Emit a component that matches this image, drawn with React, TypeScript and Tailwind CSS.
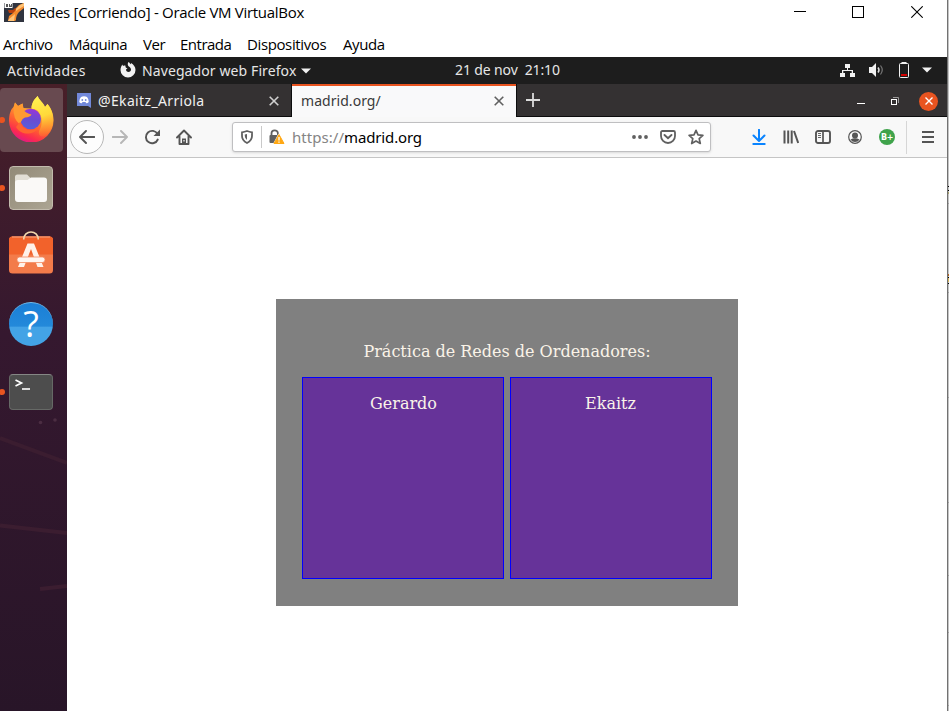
import React from 'react';

type Box = { w: number; h: number; className?: string; children: React.ReactNode };

function Icon({ w, h, className = '', children }: Box) {
  return (
    <svg width={w} height={h} viewBox={`0 0 ${w} ${h}`} fill="none" className={`block shrink-0 ${className}`}>
      {children}
    </svg>
  );
}

function TitleBar() {
  return (
    <div className="flex h-[30px] items-start bg-white text-black">
      <Icon w={20} h={20} className="ml-1 mt-[2px]">
        <rect y="1" width="20" height="19" fill="#30343f" />
        <path d="M4 9q3 2 6-1l5-5 5-2v5l-5 4q-3 3-3 8l-1 1H4l1-5 4-3z" fill="#f58a2c" />
        <path d="M16 3l4-2v3l-5 3-3 2-1-1zM5 17l5-4 1-1-1 7H4z" fill="#ffc477" />
        <path d="M4 8h5l2-2 1 2-3 3H5z" fill="#b8400f" />
        <rect x="0.500" y="0.500" width="8" height="5.500" fill="#fff" />
        <path d="M2 2h2v3H2zM5 2h1v1.500h1V2h1v3H5z" fill="#555" />
      </Icon>
      <span className="ml-[5px] mt-px w-[276px] whitespace-nowrap text-[15px] leading-[22px] tracking-[-0.3px]">
        Redes [Corriendo] - Oracle VM VirtualBox
      </span>
      <Icon w={12} h={12} className="ml-[489px] mt-[6px]">
        <path d="M0 5.500h12" stroke="#000" />
      </Icon>
      <Icon w={12} h={12} className="ml-[46px] mt-[6px]">
        <rect x="0.500" y="0.500" width="11" height="11" stroke="#000" />
      </Icon>
      <Icon w={12} h={12} className="ml-[47px] mt-[6px]">
        <path d="M0.300 0.300l11.400 11.400M11.700 0.300L0.300 11.700" stroke="#000" strokeWidth="1.100" />
      </Icon>
    </div>
  );
}

function MenuBar() {
  return (
    <div className="flex h-[27px] whitespace-nowrap bg-white pl-[3px] pt-[3px] text-[15px] leading-[22px] tracking-[-0.38px] text-black">
      <span className="w-[66px]">Archivo</span>
      <span className="w-[74px] tracking-[-0.5px]">Máquina</span>
      <span className="w-[37px]">Ver</span>
      <span className="w-[67px] tracking-[-0.5px]">Entrada</span>
      <span className="w-[96px]">Dispositivos</span>
      <span>Ayuda</span>
    </div>
  );
}

function GnomeBar() {
  return (
    <div className="flex h-[27px] items-center whitespace-nowrap bg-[#1d1d1d] font-['Noto_Sans',sans-serif] text-[14px] text-[#e6e6e6]">
      <span className="-mt-px ml-[7px] w-[112px] tracking-[0.36px]">Actividades</span>
      <Icon w={16} h={16} className="-mt-px ml-[1px]">
        <path
          d="M8.500 0c1 .500 1.600 1.500 1.800 2.300C10.800 2 11 1.600 11 1c2.600 1.500 4.500 4 4.500 7A7.500 7.500 0 0 1 .500 8C.500 5.500 1.500 3.500 2.500 2.500c0 .700.300 1.200.700 1.500.800-.500 1.500-.500 2.300-.300C5.200 5 6 6 7.500 6.200L6 7.500C6 9 7 10 8.500 10S11 9 11 7.500 9.500 5 8.500 4.300C7.500 3 7.500 1.500 8.500 0z"
          fill="#f2f2f2"
        />
      </Icon>
      <span className="ml-[6px] w-[155px] tracking-[0.1px]">Navegador web Firefox</span>
      <Icon w={10} h={6} className="ml-[4px]">
        <path d="M0 0.500h10L5 5.500z" fill="#f2f2f2" />
      </Icon>
      <span className="-mt-[2px] ml-[144px] w-[106px] whitespace-pre tracking-[-0.12px]">21 de nov  21:10</span>
      <Icon w={15} h={14} className="-mt-[2px] ml-[279px]">
        <path d="M5 1h5v4H8v2h5v3h2v4h-5v-4h1.700V8H3.300v2H5v4H0v-4h2V7h5V5H5z" fill="#f2f2f2" />
      </Icon>
      <Icon w={15} h={14} className="-mt-px ml-[14px]">
        <path d="M0 4h3l4-4v14l-4-4H0z" fill="#f2f2f2" />
        <path d="M9 4.500q2 2.500 0 5" stroke="#ddd" strokeWidth="1.500" />
        <path d="M11.500 2.500q3.500 4.500 0 9" stroke="#777" strokeWidth="1.200" />
      </Icon>
      <Icon w={10} h={16} className="-mt-[2px] ml-[15px]">
        <path d="M2.500 0h5v2h-5z" fill="#f2f2f2" />
        <rect x="0.500" y="1.500" width="9" height="14" rx="1" stroke="#f2f2f2" />
        <path d="M2 12h6v2H2z" fill="#d40000" />
      </Icon>
      <Icon w={10} h={6} className="-mt-px ml-[13px]">
        <path d="M0 0.500h10L5 5.500z" fill="#f2f2f2" />
      </Icon>
    </div>
  );
}

function Running() {
  return (
    <div className="w-[9px] shrink-0">
      <div className="-ml-[1px] h-[6px] w-[6px] rounded-full bg-[#e95420]" />
    </div>
  );
}

function FirefoxLogo() {
  return (
    <Icon w={45} h={46} className="-mt-[2px]">
      <defs>
        <linearGradient id="fox" x1="0.750" y1="0.100" x2="0.350" y2="1">
          <stop stopColor="#ffd53a" />
          <stop offset="0.350" stopColor="#ff9a2e" />
          <stop offset="0.650" stopColor="#ff5a32" />
          <stop offset="0.850" stopColor="#fb2a50" />
          <stop offset="1" stopColor="#e01a85" />
        </linearGradient>
        <linearGradient id="globe" x1="0.600" y1="0" x2="0.400" y2="1">
          <stop stopColor="#9a35d8" />
          <stop offset="0.500" stopColor="#6a4bd2" />
          <stop offset="1" stopColor="#5560dd" />
        </linearGradient>
        <linearGradient id="tail" x1="0.400" y1="0" x2="0.600" y2="1">
          <stop stopColor="#fff250" />
          <stop offset="0.500" stopColor="#ffd93a" />
          <stop offset="1" stopColor="#ff8a2d" stopOpacity="0.200" />
        </linearGradient>
      </defs>
      <path
        d="M28.700 0C30 4 34 6 36 11L38.500 8C42 12 44.500 17 44.500 24A22.200 22 0 0 1 0 25C0 18 2 13 4.500 11L6 6.500L9 10L13.500 7.500L14.500 12Q18 12 22.500 12.500C22.500 7 25.500 3 28.700 0z"
        fill="url(#fox)"
      />
      <path
        d="M28.700 0C30 4 34 6 36 11L38.500 8C47 19 46 33 36 40C31 42 28 38 31 33C34 27 33 18 28 14L22.500 12.500C22.500 7 25.500 3 28.700 0z"
        fill="url(#tail)"
      />
      <circle cx="21.700" cy="23" r="10.300" fill="url(#globe)" />
      <path
        d="M4.500 12L6 6.500L9 10L13.500 7.500L14.500 14Q17 17 22.500 18.500Q21.500 21 16 21.500Q13 22.500 12.500 25L10.500 28Q4 23 4.500 12z"
        fill="#ff9a31"
      />
      <path d="M11 26C13 33 20 36 29 32.500C25 39 12 40 7 31z" fill="#ff6430" />
    </Icon>
  );
}

function Dock() {
  return (
    <div className="relative h-full w-[67px] shrink-0 overflow-hidden bg-gradient-to-b from-[#481f28] via-[#35182f] via-40% to-[#281528]">
      <svg width="67" height="627" className="absolute left-0 top-0" fill="none">
        <path d="M0 354L67 379M0 441.500L67 449M40 505L67 502" stroke="#3b1d30" strokeWidth="4" />
        <circle cx="40.500" cy="338.500" r="1.800" fill="#4b2d42" />
        <circle cx="55" cy="336" r="1.800" fill="#4b2d42" />
      </svg>
      <div className="relative flex flex-col pt-1">
        <div className="flex h-16 w-[63px] items-center rounded-[4px] bg-[#684a50]">
          <Running />
          <FirefoxLogo />
        </div>
        <div className="mt-[14px] flex h-[44px] items-center">
          <Running />
          <div className="flex h-[44px] w-11 items-center justify-center rounded-[4px] border border-[#c2bbad] bg-gradient-to-br from-[#928a78] to-[#aca593]">
            <Icon w={32} h={28}>
              <path d="M0 6V3Q0 0.500 2.500 0.500H12L16 4.500H29Q32 4.500 32 7.500V12H0z" fill="#e2ded5" />
              <path d="M0 8.500Q0 6 3 6H12.500L16 3.500H29Q32 3.500 32 6.500V25Q32 28 29 28H3Q0 28 0 25z" fill="#faf9f7" />
            </Icon>
          </div>
        </div>
        <Icon w={44} h={43} className="ml-[9px] mt-[21px]">
          <rect y="5.500" width="44" height="37" rx="3.500" fill="#f37b4a" />
          <path d="M0 23.500V9Q0 5.500 3.500 5.500H40.500Q44 5.500 44 9V23.500z" fill="#f2622b" />
          <path d="M3 6h38" stroke="#f7a482" />
          <path d="M14.700 8.500C14.700-1.500 29.300-1.500 29.300 8.500" stroke="#f4d9ae" strokeWidth="1.600" />
          <path d="M9 36H15L22 18L28.500 36H34.500L25 12.500H18.500z" fill="#fff1e9" />
          <rect x="8" y="26" width="28" height="5.500" rx="2.700" fill="#fff5f0" stroke="#f38c63" strokeWidth="0.800" />
        </Icon>
        <div className="ml-[9px] mt-[28px] h-11 w-11 rounded-full border-t border-[#71bced] bg-gradient-to-b from-[#1b7fd6] via-[#2389da] via-54% to-[#43a3e6] to-56% text-center font-['Open_Sans',sans-serif] text-[36px] leading-[42px] text-white">
          ?
        </div>
        <div className="mt-[28px] flex h-9 items-center">
          <Running />
          <div className="h-9 w-11 rounded-[4px] border border-[#666966] border-t-[#858785] bg-[#4d4d4d]">
            <Icon w={22} h={18} className="ml-[4px] mt-[2px]">
              <path d="M1.500 3L7.500 6L1.500 9" stroke="#fff" strokeWidth="1.700" />
              <path d="M8 12h8" stroke="#fff" strokeWidth="1.600" />
            </Icon>
          </div>
        </div>
      </div>
    </div>
  );
}

function Cross({ color }: { color: string }) {
  return (
    <Icon w={10} h={10}>
      <path d="M0.700 0.700l8.600 8.600M9.300 0.700L0.700 9.300" stroke={color} strokeWidth="1.600" />
    </Icon>
  );
}

function Tabs() {
  return (
    <div className="flex h-[33px] whitespace-nowrap bg-[#343132] text-[14px] font-['Noto_Sans',sans-serif]">
      <div className="flex w-[225px] items-center border-b border-r border-[#0c0c0d] text-[#f0f0f0]">
        <Icon w={14} h={15} className="ml-[10px] mt-px">
          <path d="M0 0h14v15l-3-2H0z" fill="#7289da" />
          <path d="M4 4q3-1.400 6 0 1.800 2 1.800 5-1 1.200-2.600 1.200L8.500 9h-3l-.7 1.200Q3 10.200 2.200 9 2.200 6 4 4z" fill="#fff" />
          <circle cx="5.300" cy="7" r="0.900" fill="#7289da" />
          <circle cx="8.700" cy="7" r="0.900" fill="#7289da" />
        </Icon>
        <span className="ml-[7px] w-[171px] tracking-[0.35px]">@Ekaitz_Arriola</span>
        <div className="mt-px">
          <Cross color="#d0d0d0" />
        </div>
      </div>
      <div className="flex w-[224px] items-center border-t-2 border-[#e95420] bg-[#f9f9fa] pb-[2px] text-[#3a3a3a]">
        <span className="ml-[9px] w-[193px] tracking-[0.05px]">madrid.org/</span>
        <Cross color="#606060" />
      </div>
      <div className="flex grow items-center border-b border-l border-[#0c0c0d]">
        <Icon w={14} h={14} className="ml-[9px]">
          <path d="M7 0v14M0 7h14" stroke="#dcdcdc" strokeWidth="1.800" />
        </Icon>
        <Icon w={8} h={8} className="ml-[317px] mt-[1px]">
          <path d="M0 6.500h8" stroke="#fff" />
        </Icon>
        <Icon w={8} h={8} className="ml-[26px] mt-[2px]">
          <path d="M2 0.500h5.500V6" stroke="#9b9999" />
          <rect x="0.500" y="2.500" width="5" height="5" stroke="#fff" />
        </Icon>
        <div className="ml-[20px] mt-[2px] flex h-[19px] w-[19px] items-center justify-center rounded-full bg-[#e95420]">
          <Icon w={8} h={8}>
            <path d="M0.500 0.500l7 7M7.500 0.500l-7 7" stroke="#fff" strokeWidth="1.400" />
          </Icon>
        </div>
      </div>
    </div>
  );
}

function AddressBar() {
  return (
    <div className="flex h-[30px] w-[479px] items-center rounded-[3px] border border-[#bfbfc1] bg-white shadow-sm">
      <Icon w={12} h={14} className="ml-[8px]">
        <path d="M6 1Q8.500 2 11 2.300V6Q11 10.500 6 13Q1 10.500 1 6V2.300Q3.500 2 6 1z" stroke="#606060" strokeWidth="1.800" />
        <path d="M6 4v6q-2.200-1.500-2.200-4V4.500z" fill="#606060" />
      </Icon>
      <div className="ml-[8px] h-[22px] w-px bg-[#c9c9c9]" />
      <Icon w={16} h={16} className="ml-[7px]">
        <path d="M2.500 8V4.500a3.200 3.200 0 0 1 6.400 0V6" stroke="#606060" strokeWidth="1.800" />
        <rect x="0.500" y="6" width="9" height="8" rx="1" fill="#606060" />
        <path d="M9.500 4.500L16 15H4z" fill="#fff" />
        <path d="M10 5.500L15 14.500H5z" fill="#ffa814" stroke="#ffa814" strokeLinejoin="round" />
        <path d="M10 8v3.500M10 12.500v1.200" stroke="#fff" strokeWidth="1.300" />
      </Icon>
      <span className="ml-[7px] w-[131px] whitespace-nowrap font-['Noto_Sans',sans-serif] text-[15px] text-black">
        <span className="text-[#858585] tracking-[0.05px]">https://</span>
        <span className="tracking-[-0.15px]">madrid.org</span>
      </span>
      <Icon w={16} h={4} className="ml-[209px]">
        <path d="M2 2h.01M8 2h.01M14 2h.01" stroke="#606060" strokeWidth="3.800" strokeLinecap="round" />
      </Icon>
      <Icon w={16} h={14} className="ml-[12px]">
        <path d="M2.500 1h11Q15 1 15 2.500V6a7 7 0 0 1-14 0V2.500Q1 1 2.500 1z" stroke="#606060" strokeWidth="1.800" />
        <path d="M4.500 5L8 8.300 11.500 5" stroke="#606060" strokeWidth="1.900" strokeLinecap="round" />
      </Icon>
      <Icon w={16} h={16} className="ml-[12px]">
        <path d="M8 1.300l2 4.500 4.900.500-3.700 3.300 1.100 4.900L8 12l-4.300 2.500 1.100-4.900L1.100 6.300 6 5.800z" stroke="#606060" strokeWidth="1.700" strokeLinejoin="round" />
      </Icon>
    </div>
  );
}

function Toolbar() {
  return (
    <div className="flex h-[41px] items-center border-b border-[#c5c5c5] bg-[#f8f8f8]">
      <div className="ml-[3px] flex h-[34px] w-[34px] items-center justify-center rounded-full border border-[#b8b8b8] bg-[#fdfdfd]">
        <Icon w={16} h={14}>
          <path d="M15.500 7H1.500M7 1L1 7l6 6" stroke="#555" strokeWidth="1.900" strokeLinecap="round" strokeLinejoin="round" />
        </Icon>
      </div>
      <Icon w={16} h={14} className="ml-[8px]">
        <path d="M.500 7h14M9 1l6 6-6 6" stroke="#b7b7b7" strokeWidth="1.900" strokeLinecap="round" strokeLinejoin="round" />
      </Icon>
      <Icon w={16} h={16} className="ml-[16px]">
        <path d="M13.800 10.500a6.200 6.200 0 1 1-.3-5.500" stroke="#555" strokeWidth="1.900" strokeLinecap="round" />
        <path d="M16 0.500v6.500H9.500z" fill="#555" />
      </Icon>
      <Icon w={16} h={16} className="ml-[16px]">
        <path d="M1 8.500l7-7 7 7M3.500 7.500V15h9V7.500" stroke="#555" strokeWidth="1.900" strokeLinecap="round" strokeLinejoin="round" />
        <path d="M6 15V9.500h4V15z" fill="#555" />
        <path d="M8 11v1.500" stroke="#f8f8f8" strokeWidth="1.200" />
      </Icon>
      <div className="ml-[40px]">
        <AddressBar />
      </div>
      <Icon w={14} h={16} className="ml-[41px]">
        <path d="M7 0.800v11M1.500 6.500L7 12l5.500-5.500M1.300 15h11.400" stroke="#0a84ff" strokeWidth="2" strokeLinecap="round" strokeLinejoin="round" />
      </Icon>
      <Icon w={16} h={14} className="ml-[17px]">
        <path d="M1.500 0.500v13M5.200 0.500v13M8.700 0.500v13M11 1l4.200 12" stroke="#555" strokeWidth="2" />
      </Icon>
      <Icon w={16} h={14} className="ml-[16px]">
        <rect x="1" y="1" width="14" height="12" rx="2" stroke="#555" strokeWidth="1.900" />
        <path d="M8 1v12" stroke="#555" strokeWidth="1.700" />
        <path d="M3 3.500h3M3 5.500h3M3 7.500h3" stroke="#666" />
      </Icon>
      <Icon w={14} h={14} className="ml-[17px]">
        <circle cx="7" cy="7" r="6.300" stroke="#555" strokeWidth="1.200" />
        <circle cx="7" cy="5.500" r="3" fill="#555" />
        <path d="M2.500 9.500Q7 7 11.500 9.500Q10 12 7 12T2.500 9.500z" fill="#555" />
      </Icon>
      <div className="ml-[17px] flex h-4 w-4 items-center justify-center rounded-full bg-[#3fa34b] pt-px font-['DejaVu_Sans',sans-serif] text-[8px] font-bold tracking-[-0.5px] text-white">
        B+
      </div>
      <div className="ml-[11px] h-[33px] w-px bg-[#d6d6d6]" />
      <Icon w={12} h={12} className="ml-[15px]">
        <path d="M0 1h12M0 6h12M0 11h12" stroke="#555" strokeWidth="1.800" />
      </Icon>
    </div>
  );
}

function Card({ name, className }: { name: string; className: string }) {
  return (
    <div className={`h-[202px] w-[202px] border border-[#0000ff] bg-[#663399] pt-[16px] text-center ${className}`}>{name}</div>
  );
}

function Page() {
  return (
    <div className="grow bg-white">
      <div className="ml-[209px] mt-[141px] h-[307px] w-[462px] bg-[#808080] pt-[43px] text-center font-['DejaVu_Serif',serif] text-[16px] leading-[19px] text-[#faf3e8]">
        <p className="h-[35px]">Práctica de Redes de Ordenadores:</p>
        <div className="flex justify-center gap-[6px]">
          <Card name="Gerardo" className="pl-px" />
          <Card name="Ekaitz" className="pr-px" />
        </div>
      </div>
    </div>
  );
}

function WindowEdge() {
  return (
    <div className="flex w-px flex-col bg-[#c4c4c4]">
      <div className="mt-[186px] h-px bg-black" />
      <div className="mt-[3px] h-px bg-black" />
      <div className="mt-px h-[2px] bg-[#a8a06a]" />
      <div className="mt-[9px] h-px bg-[#a0a0a0]" />
      <div className="mt-[70px] h-[2px] bg-[#b5651d]" />
      <div className="mt-px h-px bg-black" />
      <div className="h-[4px] bg-[#d8b860]" />
      <div className="mt-px h-px bg-black" />
      <div className="mt-[8px] h-px bg-[#a0a0a0]" />
      <div className="mt-[104px] h-px bg-[#a0a0a0]" />
      <div className="mt-[104px] h-px bg-[#a0a0a0]" />
      <div className="mt-[72px] h-px bg-[#a0a0a0]" />
      <div className="mt-[56px] h-px bg-[#a0a0a0]" />
      <div className="mt-[72px] h-px bg-[#a0a0a0]" />
    </div>
  );
}

export default function App() {
  return (
    <div className="flex h-[711px] w-[949px] overflow-hidden bg-white font-['Open_Sans',sans-serif]">
      <div className="flex w-[947px] shrink-0 flex-col">
        <TitleBar />
        <MenuBar />
        <GnomeBar />
        <div className="flex min-h-0 grow">
          <Dock />
          <div className="flex min-w-0 grow flex-col">
            <Tabs />
            <Toolbar />
            <Page />
          </div>
        </div>
      </div>
      <div className="w-px bg-[#727272]" />
      <WindowEdge />
    </div>
  );
}
